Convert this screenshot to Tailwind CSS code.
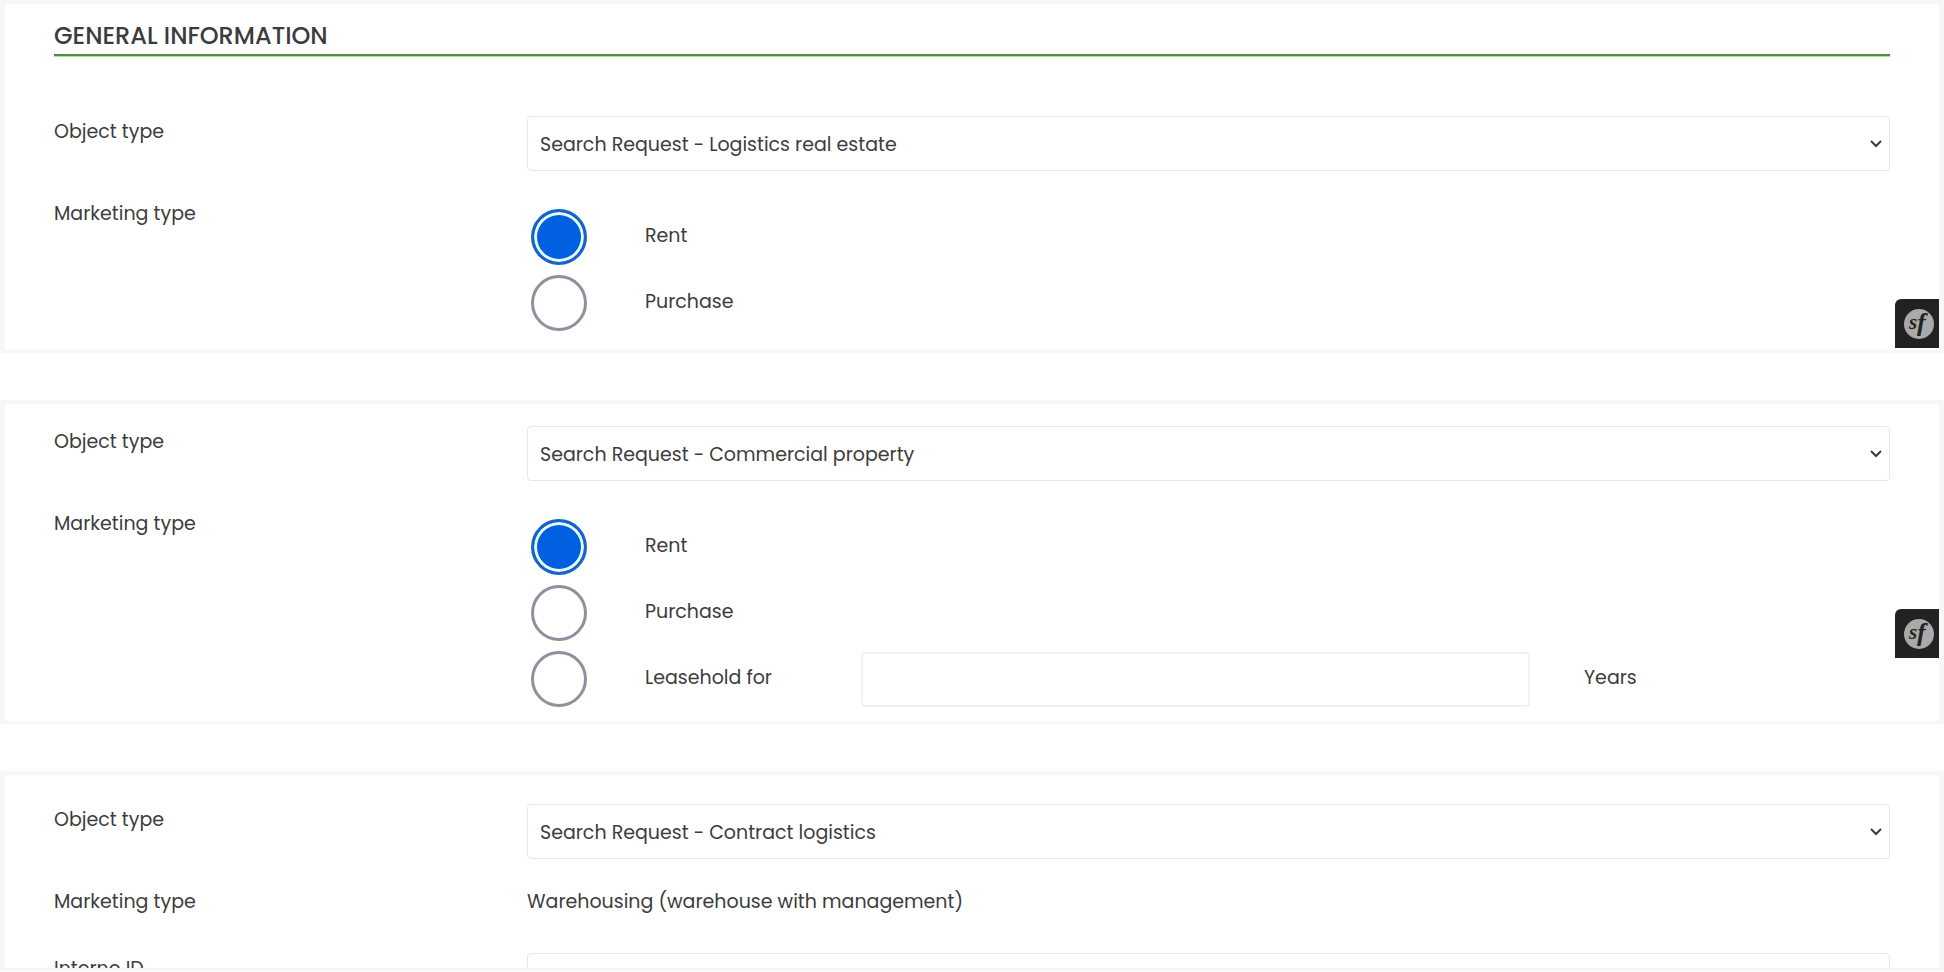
<!DOCTYPE html>
<html lang="en">
<head>
  <meta charset="UTF-8" />
  <meta name="viewport" content="width=device-width, initial-scale=1.0" />
  <title>General information</title>
  <script src="https://cdn.jsdelivr.net/npm/@tailwindcss/browser@4"></script>
</head>
<body class="flex flex-col gap-[47px] h-screen overflow-hidden pb-px bg-white font-[Poppins,Inter,sans-serif] text-[19px] leading-8 text-[#3c3c3c]">

  <!-- Logistics real estate -->
  <section class="relative shrink-0 border-[#f7f7f7] border-x-[5px] border-t-4 border-b-[3px] px-[49px] pt-[14px] pb-[14px]">
    <h2 class="mb-[60px] border-b-2 border-[#4e8f3c] shadow-[0_1px_0_#b5dba6] text-[24px] leading-9 font-medium uppercase">General information</h2>
    <div class="grid gap-y-[27px]">
      <div class="grid grid-cols-4 gap-x-14">
        <label for="object-1">Object type</label>
        <div class="relative col-span-3">
          <select id="object-1" class="block w-full h-[55px] appearance-none rounded border border-[#e6e6f0] bg-white pt-[2px] pl-3 pr-10">
            <option>Search Request - Logistics real estate</option>
          </select>
          <svg class="absolute right-2 top-6 w-3 h-2 pointer-events-none" viewBox="0 0 12 8" fill="none" stroke="#3c3c3c" stroke-width="2"><path d="M1 1l5 5 5-5" /></svg>
        </div>
      </div>
      <div class="grid grid-cols-4 gap-x-14">
        <span id="marketing-1">Marketing type</span>
        <div role="radiogroup" aria-labelledby="marketing-1" class="col-span-3 pt-[6px]">
          <div class="grid grid-cols-[64px_1fr] items-center gap-x-[54px] h-[66px]">
            <input type="radio" id="rent-1" name="type-1" checked class="ml-1 size-14 appearance-none rounded-full border-[3px] border-[#8f8f9d] checked:border-[#1565c8] checked:bg-[#0060df] checked:shadow-[inset_0_0_0_3px_#e8fbff]" />
            <label for="rent-1" class="pb-[2px]">Rent</label>
          </div>
          <div class="grid grid-cols-[64px_1fr] items-center gap-x-[54px] h-[66px]">
            <input type="radio" id="purchase-1" name="type-1" class="ml-1 size-14 appearance-none rounded-full border-[3px] border-[#8f8f9d] checked:border-[#1565c8] checked:bg-[#0060df] checked:shadow-[inset_0_0_0_3px_#e8fbff]" />
            <label for="purchase-1" class="pb-[2px]">Purchase</label>
          </div>
        </div>
      </div>
    </div>
    <button type="button" aria-label="Symfony toolbar" class="absolute right-0 bottom-[2px] flex items-center justify-center w-11 h-[49px] pl-1 rounded-tl-md bg-[#222]">
      <svg class="size-[30px]" viewBox="0 0 30 30" fill="#222" font-family="Liberation Serif, serif" font-style="italic" font-weight="bold">
        <circle cx="15" cy="15" r="15" fill="#aaa" />
        <text x="5" y="20" font-size="21">s</text>
        <text x="13" y="22" font-size="26">f</text>
      </svg>
    </button>
  </section>

  <!-- Commercial property -->
  <section class="relative shrink-0 border-[#f7f7f7] border-x-[5px] border-t-4 border-b-[3px] px-[49px] pt-[22px] pb-[9px]">
    <div class="grid gap-y-[27px]">
      <div class="grid grid-cols-4 gap-x-14">
        <label for="object-2">Object type</label>
        <div class="relative col-span-3">
          <select id="object-2" class="block w-full h-[55px] appearance-none rounded border border-[#e6e6f0] bg-white pt-[2px] pl-3 pr-10">
            <option>Search Request - Commercial property</option>
          </select>
          <svg class="absolute right-2 top-6 w-3 h-2 pointer-events-none" viewBox="0 0 12 8" fill="none" stroke="#3c3c3c" stroke-width="2"><path d="M1 1l5 5 5-5" /></svg>
        </div>
      </div>
      <div class="grid grid-cols-4 gap-x-14">
        <span id="marketing-2">Marketing type</span>
        <div role="radiogroup" aria-labelledby="marketing-2" class="col-span-3 pt-[6px]">
          <div class="grid grid-cols-[64px_1fr] items-center gap-x-[54px] h-[66px]">
            <input type="radio" id="rent-2" name="type-2" checked class="ml-1 size-14 appearance-none rounded-full border-[3px] border-[#8f8f9d] checked:border-[#1565c8] checked:bg-[#0060df] checked:shadow-[inset_0_0_0_3px_#e8fbff]" />
            <label for="rent-2" class="pb-[2px]">Rent</label>
          </div>
          <div class="grid grid-cols-[64px_1fr] items-center gap-x-[54px] h-[66px]">
            <input type="radio" id="purchase-2" name="type-2" class="ml-1 size-14 appearance-none rounded-full border-[3px] border-[#8f8f9d] checked:border-[#1565c8] checked:bg-[#0060df] checked:shadow-[inset_0_0_0_3px_#e8fbff]" />
            <label for="purchase-2" class="pb-[2px]">Purchase</label>
          </div>
          <div class="grid grid-cols-[64px_162px_1fr_306px] items-center gap-x-[54px] h-[66px]">
            <input type="radio" id="leasehold-2" name="type-2" class="ml-1 size-14 appearance-none rounded-full border-[3px] border-[#8f8f9d] checked:border-[#1565c8] checked:bg-[#0060df] checked:shadow-[inset_0_0_0_3px_#e8fbff]" />
            <label for="leasehold-2" class="pb-[2px]">Leasehold for</label>
            <input type="text" id="years-2" class="w-full h-[55px] rounded border-2 border-[#f0f0f5] px-3" />
            <label for="years-2" class="pb-[2px]">Years</label>
          </div>
        </div>
      </div>
    </div>
    <button type="button" aria-label="Symfony toolbar" class="absolute right-0 bottom-[63px] flex items-center justify-center w-11 h-[49px] pl-1 rounded-tl-md bg-[#222]">
      <svg class="size-[30px]" viewBox="0 0 30 30" fill="#222" font-family="Liberation Serif, serif" font-style="italic" font-weight="bold">
        <circle cx="15" cy="15" r="15" fill="#aaa" />
        <text x="5" y="20" font-size="21">s</text>
        <text x="13" y="22" font-size="26">f</text>
      </svg>
    </button>
  </section>

  <!-- Contract logistics -->
  <section class="flex-1 min-h-0 overflow-hidden border-[#f7f7f7] border-x-[5px] border-t-4 border-b-[3px] px-[49px] pt-[29px]">
    <div class="grid gap-y-[27px]">
      <div class="grid grid-cols-4 gap-x-14">
        <label for="object-3">Object type</label>
        <div class="relative col-span-3">
          <select id="object-3" class="block w-full h-[55px] appearance-none rounded border border-[#e6e6f0] bg-white pt-[2px] pl-3 pr-10">
            <option>Search Request - Contract logistics</option>
          </select>
          <svg class="absolute right-2 top-6 w-3 h-2 pointer-events-none" viewBox="0 0 12 8" fill="none" stroke="#3c3c3c" stroke-width="2"><path d="M1 1l5 5 5-5" /></svg>
        </div>
      </div>
      <div class="grid grid-cols-4 gap-x-14 min-h-10">
        <span>Marketing type</span>
        <span class="col-span-3">Warehousing (warehouse with management)</span>
      </div>
      <div class="grid grid-cols-4 gap-x-14">
        <label for="interne-id">Interne ID</label>
        <input type="text" id="interne-id" class="col-span-3 h-[55px] rounded border border-[#e6e6f0] px-3" />
      </div>
    </div>
  </section>

</body>
</html>
